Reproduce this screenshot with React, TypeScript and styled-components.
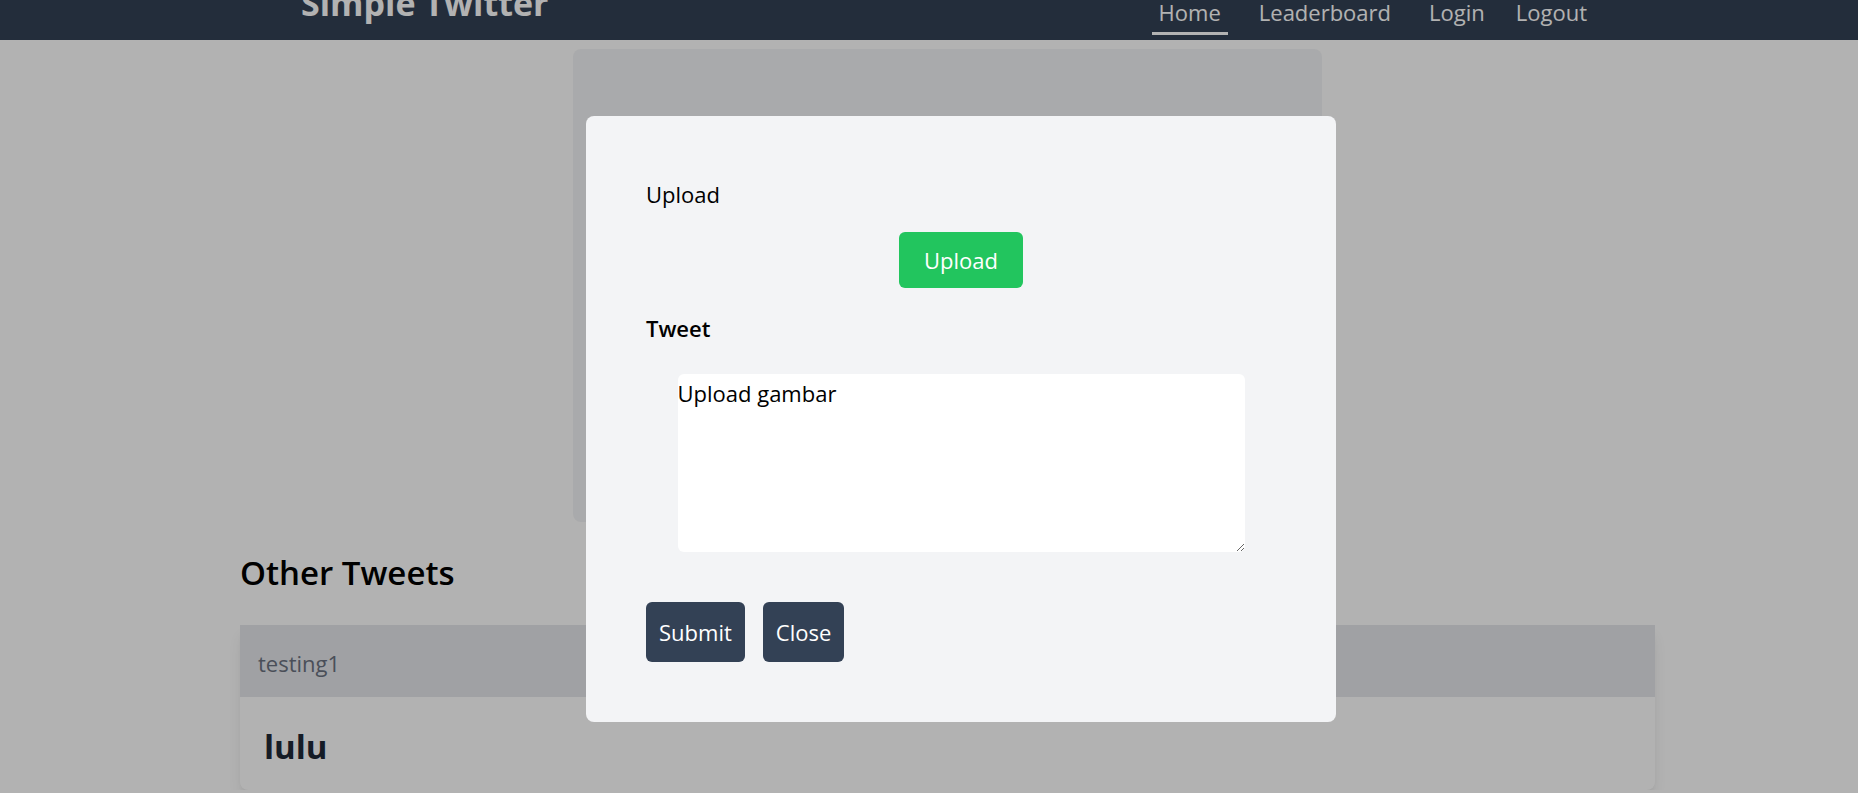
import React from "react";
import styled, { createGlobalStyle } from "styled-components";

const GlobalStyle = createGlobalStyle`
  html, body {
    margin: 0;
    padding: 0;
    background: #ffffff;
    overflow: hidden;
  }
  body {
    font-family: "Open Sans", "Noto Sans", sans-serif;
    color: #000000;
  }
  *, *::before, *::after {
    box-sizing: border-box;
  }
`;

const Nav = styled.nav`
  height: 40px;
  background: #334155;
  display: flex;
  align-items: flex-start;
  justify-content: space-between;
  padding: 0 264px 0 301px;
  overflow: hidden;
`;

const Brand = styled.h1`
  margin: -17px 0 0;
  font-size: 34px;
  line-height: 40px;
  font-weight: 700;
  color: #ffffff;
`;

const NavLinks = styled.div`
  display: flex;
  gap: 24px;
`;

const NavLink = styled.a<{ $active?: boolean; $tight?: boolean }>`
  font-size: 22px;
  line-height: 24px;
  padding: 0 7px 8px;
  border-bottom: 3px solid ${(p) => (p.$active ? "#ffffff" : "transparent")};
  margin-left: ${(p) => (p.$tight ? "-7px" : "0")};
  color: #ffffff;
  text-decoration: none;
  cursor: pointer;
`;

const Main = styled.main`
  width: 1415px;
  margin-left: 240px;
  padding-top: 9px;
`;

const ComposeCard = styled.section`
  width: 749px;
  height: 473px;
  margin: 0 auto;
  background: #f3f4f6;
  border-radius: 8px;
`;

const SectionTitle = styled.h2`
  margin: 31px 0 32px;
  font-size: 33px;
  line-height: 40px;
  font-weight: 600;
  color: #000000;
`;

const TweetCard = styled.article`
  background: #ffffff;
  border-radius: 0 0 8px 8px;
  box-shadow: 0 10px 15px -3px rgba(0, 0, 0, 0.1), 0 4px 6px -4px rgba(0, 0, 0, 0.1);
  overflow: hidden;
`;

const TweetHeader = styled.div`
  background: #e5e7eb;
  padding: 22px 18px 18px;
  font-size: 22px;
  line-height: 32px;
  color: #6b7280;
`;

const TweetBody = styled.div`
  padding: 30px 24px 23px;
  font-size: 33px;
  line-height: 40px;
  font-weight: 700;
  color: #1f2937;
`;

const Overlay = styled.div`
  position: fixed;
  inset: 0;
  background: rgba(0, 0, 0, 0.3);
  display: flex;
  justify-content: center;
  align-items: flex-start;
  padding: 116px 0 0 64px;
`;

const Modal = styled.div`
  width: 750px;
  background: #f3f4f6;
  border-radius: 8px;
  padding: 62px 60px 60px;
  display: flex;
  flex-direction: column;
`;

const FieldLabel = styled.label<{ $bold?: boolean; $gap?: number }>`
  display: block;
  margin-top: ${(p) => p.$gap ?? 0}px;
  font-size: 22px;
  line-height: 32px;
  font-weight: ${(p) => (p.$bold ? 600 : 400)};
  color: #000000;
`;

const UploadButton = styled.button`
  align-self: center;
  margin-top: 22px;
  padding: 12px 25px;
  border: none;
  border-radius: 6px;
  background: #22c55e;
  color: #ffffff;
  font-family: inherit;
  font-size: 22px;
  line-height: 32px;
  cursor: pointer;
`;

const TweetInput = styled.textarea`
  display: block;
  align-self: center;
  width: 90%;
  height: 178px;
  margin-top: 30px;
  padding: 3px 0 0;
  border: none;
  border-radius: 6px;
  background: #ffffff;
  color: #000000;
  font-family: inherit;
  font-size: 22px;
  line-height: 32px;
  outline: none;
  resize: vertical;
`;

const Actions = styled.div`
  display: flex;
  gap: 18px;
  margin-top: 50px;
`;

const ActionButton = styled.button`
  padding: 14px 13px;
  border: none;
  border-radius: 6px;
  background: #334155;
  color: #ffffff;
  font-family: inherit;
  font-size: 22px;
  line-height: 32px;
  cursor: pointer;
`;

export default function App() {
  return (
    <>
      <GlobalStyle />
      <Nav>
        <Brand>Simple Twitter</Brand>
        <NavLinks>
          <NavLink $active>Home</NavLink>
          <NavLink>Leaderboard</NavLink>
          <NavLink>Login</NavLink>
          <NavLink $tight>Logout</NavLink>
        </NavLinks>
      </Nav>
      <Main>
        <ComposeCard />
        <SectionTitle>Other Tweets</SectionTitle>
        <TweetCard>
          <TweetHeader>testing1</TweetHeader>
          <TweetBody>lulu</TweetBody>
        </TweetCard>
      </Main>
      <Overlay>
        <Modal>
          <FieldLabel>Upload</FieldLabel>
          <UploadButton type="button">Upload</UploadButton>
          <FieldLabel $bold $gap={24}>Tweet</FieldLabel>
          <TweetInput defaultValue="Upload gambar" spellCheck={false} />
          <Actions>
            <ActionButton type="button">Submit</ActionButton>
            <ActionButton type="button">Close</ActionButton>
          </Actions>
        </Modal>
      </Overlay>
    </>
  );
}
